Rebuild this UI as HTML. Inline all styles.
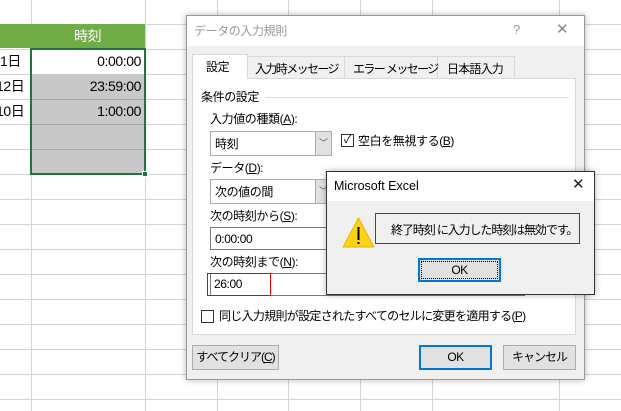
<!DOCTYPE html>
<html><head><meta charset="utf-8"><style>
*{margin:0;padding:0;box-sizing:border-box}
body{width:621px;height:411px;overflow:hidden;background:#fff;position:relative;font-family:"Liberation Sans","Noto Sans CJK JP",sans-serif;font-size:12px;color:#000}
.a{position:absolute}
.h{position:absolute;left:0;width:621px;height:1px;background:#d4d4d4}
.v{position:absolute;top:0;height:411px;width:1px;background:#d4d4d4}
.t{position:absolute;white-space:nowrap;line-height:14px;letter-spacing:-0.4px}
.u{text-decoration:underline}
.box{position:absolute;background:#fff;border:1px solid #7a7a7a}
.dd{position:absolute;background:#e1e1e1;border-left:1px solid #adadad;top:0;bottom:0;right:0;width:16px;color:#555;font-size:9px;text-align:center;line-height:22px}
.btn{position:absolute;background:#e1e1e1;border:1px solid #adadad;text-align:center;white-space:nowrap;letter-spacing:-0.5px}
</style></head><body>
<div class="h" style="top:24px"></div><div class="h" style="top:49px"></div><div class="h" style="top:74px"></div><div class="h" style="top:99px"></div><div class="h" style="top:124px"></div><div class="h" style="top:149px"></div><div class="h" style="top:174px"></div><div class="h" style="top:199px"></div><div class="h" style="top:224px"></div><div class="h" style="top:249px"></div><div class="h" style="top:274px"></div><div class="h" style="top:299px"></div><div class="h" style="top:324px"></div><div class="h" style="top:349px"></div><div class="h" style="top:374px"></div><div class="h" style="top:399px"></div>
<div class="v" style="left:31px"></div><div class="v" style="left:145px"></div><div class="v" style="left:217px"></div><div class="v" style="left:288px"></div><div class="v" style="left:360px"></div><div class="v" style="left:432px"></div><div class="v" style="left:559px"></div>
<div class="a" style="left:0;top:24px;width:145px;height:24px;background:#70ad47"></div>
<div class="t" style="left:74px;top:29px;color:#fff;font-size:14px">時刻</div>
<div class="a" style="left:32px;top:74px;width:112px;height:100px;background:#c8c8c8"></div>
<div class="a" style="left:32px;top:99px;width:112px;height:1px;background:#aaa"></div>
<div class="a" style="left:32px;top:124px;width:112px;height:1px;background:#aaa"></div>
<div class="a" style="left:32px;top:149px;width:112px;height:1px;background:#aaa"></div>
<div class="a" style="left:30px;top:48px;width:116px;height:127px;border:2px solid #217346"></div>
<div class="a" style="left:142px;top:171px;width:6px;height:6px;background:#217346;border:1px solid #fff"></div>
<div class="t" style="left:0;top:54px;font-size:14px">1日</div><div class="t" style="left:-4px;top:79px;font-size:14px">12日</div><div class="t" style="left:-4px;top:104px;font-size:14px">10日</div>
<div class="t" style="right:480px;top:54px;font-size:14px">0:00:00</div><div class="t" style="right:480px;top:79px;font-size:14px">23:59:00</div><div class="t" style="right:480px;top:104px;font-size:14px">1:00:00</div>

<div class="a" style="left:186px;top:15px;width:399px;height:365px;background:#f0f0f0;border:1px solid #999;box-shadow:0 0 6px rgba(0,0,0,.3)"></div>
<div class="a" style="left:187px;top:16px;width:397px;height:30px;background:#fff"></div>
<div class="t" style="left:194px;top:24px;color:#999">データの入力規則</div>
<div class="t" style="left:513px;top:23px;color:#999;font-size:13px">?</div>
<div class="t" style="left:556px;top:23px;color:#888;font-size:15px">✕</div>
<div class="a" style="left:192px;top:78px;width:384px;height:257px;background:#fff;border:1px solid #d9d9d9"></div>
<div class="a" style="left:247px;top:56px;width:98px;height:23px;border:1px solid #d9d9d9;background:#f0f0f0"></div>
<div class="a" style="left:344px;top:56px;width:94px;height:23px;border:1px solid #d9d9d9;background:#f0f0f0"></div>
<div class="a" style="left:437px;top:56px;width:78px;height:23px;border:1px solid #d9d9d9;background:#f0f0f0"></div>
<div class="a" style="left:192px;top:54px;width:56px;height:25px;border:1px solid #d9d9d9;border-bottom:none;background:#fff"></div>
<div class="t" style="left:206px;top:60px">設定</div>
<div class="t" style="left:255px;top:62px;letter-spacing:-1.6px">入力時メッセージ</div>
<div class="t" style="left:353px;top:62px;letter-spacing:-1.6px">エラー メッセージ</div>
<div class="t" style="left:447px;top:62px;letter-spacing:-0.8px">日本語入力</div>
<div class="t" style="left:201px;top:90px">条件の設定</div>
<div class="a" style="left:265px;top:97px;width:304px;height:1px;background:#dcdcdc"></div>
<div class="t" style="left:210px;top:112px">入力値の種類(<span class="u">A</span>):</div>
<div class="box" style="left:210px;top:131px;width:122px;height:25px;border-color:#adadad"><div class="t" style="left:4px;top:5px">時刻</div><div class="dd">﹀</div></div>
<div class="a" style="left:341px;top:134px;width:13px;height:13px;border:1px solid #333;background:#fff;font-size:11px;line-height:11px;text-align:center">✓</div>
<div class="t" style="left:358px;top:134px">空白を無視する(<span class="u">B</span>)</div>
<div class="t" style="left:210px;top:161px">データ(<span class="u">D</span>):</div>
<div class="box" style="left:210px;top:179px;width:122px;height:25px;border-color:#adadad"><div class="t" style="left:4px;top:5px">次の値の間</div><div class="dd">﹀</div></div>
<div class="t" style="left:210px;top:209px">次の時刻から(<span class="u">S</span>):</div>
<div class="box" style="left:210px;top:227px;width:315px;height:23px"><div class="t" style="left:4px;top:4px">0:00:00</div></div>
<div class="t" style="left:210px;top:255px">次の時刻まで(<span class="u">N</span>):</div>
<div class="box" style="left:210px;top:273px;width:315px;height:23px"></div>
<div class="a" style="left:207px;top:273px;width:64px;height:23px;border:1px solid #e00;z-index:2"></div>
<div class="t" style="left:214px;top:277px">26:00</div>
<div class="a" style="left:201px;top:310px;width:13px;height:13px;border:1px solid #333;background:#fff"></div>
<div class="t" style="left:219px;top:309px;letter-spacing:-0.7px">同じ入力規則が設定されたすべてのセルに変更を適用する(<span class="u">P</span>)</div>
<div class="btn" style="left:192px;top:345px;width:87px;height:25px;line-height:23px;letter-spacing:-1px">すべてクリア(<span class="u">C</span>)</div>
<div class="btn" style="left:419px;top:345px;width:73px;height:25px;line-height:21px;border:2px solid #0078d7">OK</div>
<div class="btn" style="left:503px;top:345px;width:73px;height:25px;line-height:23px;letter-spacing:-1px">キャンセル</div>

<div class="a" style="left:326px;top:171px;width:269px;height:124px;background:#f0f0f0;border:1px solid #333;box-shadow:0 0 6px rgba(0,0,0,.3);z-index:3">
<div class="a" style="left:0;top:0;width:267px;height:29px;background:#fff"></div>
<div class="t" style="left:7px;top:7px;font-size:12.5px;letter-spacing:0">Microsoft Excel</div>
<div class="t" style="left:245px;top:6px;font-size:15px;color:#222">✕</div>
<svg class="a" style="left:15px;top:44px" width="33" height="33"><polygon points="16.5,2 32,31 1,31" fill="#fcd116" stroke="#e6b800"/><rect x="15.5" y="11" width="2" height="13" fill="#000"/><rect x="15.5" y="26" width="2" height="2" fill="#000"/></svg>
<div class="a" style="left:48px;top:41px;width:205px;height:31px;border:1px solid #e00"></div>
<div class="t" style="left:64px;top:51px;letter-spacing:-1.1px">終了時刻 に入力した時刻は無効です。</div>
<div class="btn" style="left:91px;top:86px;width:83px;height:24px;line-height:20px;border:2px solid #0078d7;outline:1px dotted #000;outline-offset:-4px">OK</div>
</div>
</body></html>
